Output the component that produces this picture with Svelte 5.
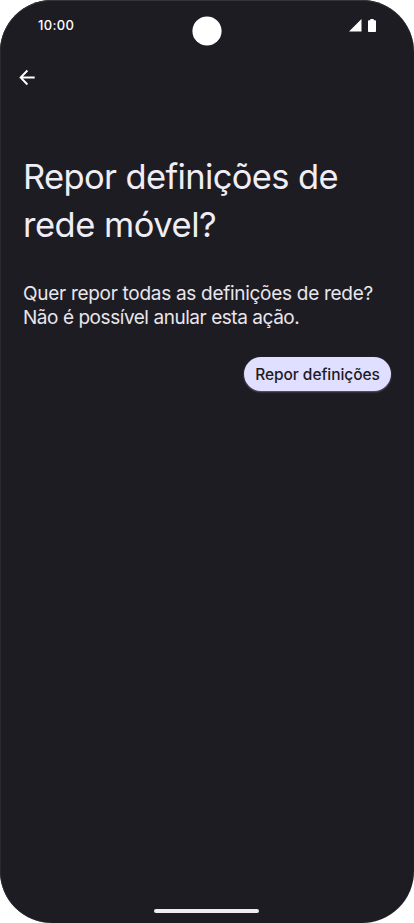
<script lang="ts">
  const time = '10:00';
  const title = ['Repor definições de', 'rede móvel?'];
  const message = ['Quer repor todas as definições de rede?', 'Não é possível anular esta ação.'];
</script>

<div class="phone">
  <header class="status">
    <span class="time">{time}</span>
    <svg class="camera" width="30" height="30" viewBox="0 0 30 30" aria-hidden="true"><circle cx="15" cy="15" r="14.6" fill="#fff" /></svg>
    <span class="indicators">
      <svg class="signal" width="13" height="13" viewBox="0 0 13 13" aria-hidden="true"><path d="M12.5 0V12.5H0Z" /></svg>
      <svg width="8" height="13" viewBox="0 0 8 13" aria-hidden="true"><path d="M2.3 0H5.7V1.2H7.2Q8 1.2 8 2V12.2Q8 13 7.2 13H.8Q0 13 0 12.2V2Q0 1.2.8 1.2H2.3Z" /></svg>
    </span>
  </header>
  <nav>
    <button class="back" aria-label="Voltar">
      <svg width="16" height="16" viewBox="0 0 16 16" aria-hidden="true"><path d="M15.7 7.5H1.6M8.4 .5L1.6 7.5L8.4 14.5" /></svg>
    </button>
  </nav>
  <main>
    <h1>
      {#each title as line, i}<span class="t{i}">{line}</span>{/each}
    </h1>
    <p>
      {#each message as line, i}<span class="m{i}">{line}</span>{/each}
    </p>
    <div class="actions"><button class="reset">Repor definições</button></div>
  </main>
  <footer><span class="handle"></span></footer>
</div>

<style>
  :global(body) { background: #fff; overflow: hidden; }
  .phone {
    box-sizing: border-box;
    width: 414px;
    height: 923px;
    display: flex;
    flex-direction: column;
    border-radius: 52px;
    overflow: hidden;
    background: #1d1c22;
    box-shadow: inset 0 1px #34343a, inset 1px 0 #292930;
    color: #efedf5;
    font-family: Inter, "Open Sans", sans-serif;
  }
  .status {
    display: grid;
    grid-template-columns: 1fr 30px 1fr;
    height: 62px;
    flex: none;
  }
  .time { padding: 16px 0 0 38px; font-size: 13px; line-height: 18px; font-weight: 500; letter-spacing: .35px; color: #fff; }
  .camera { display: block; margin-top: 16px; }
  .indicators { display: flex; justify-content: flex-end; gap: 7px; padding: 19px 38px 0 0; }
  .indicators path { fill: #fff; }
  .signal { margin-right: -1px; }
  nav { height: 80px; box-sizing: border-box; flex: none; padding: 8px 0 0 19px; }
  button { margin: 0; border: 0; font-family: inherit; }
  .back { display: block; width: 16px; height: 16px; padding: 0; background: none; }
  .back svg { display: block; overflow: visible; }
  .back path { fill: none; stroke: #fff; stroke-width: 1.9; }
  main { flex: 1; padding: 11px 23px 0; }
  h1 { margin: 0; font-size: 34.5px; line-height: 48px; font-weight: 380; }
  h1 span, p span { display: block; width: max-content; white-space: nowrap; }
  .t0 { letter-spacing: -.64px; }
  .t1 { letter-spacing: -.48px; }
  p { margin: 33px 0 0; font-size: 19px; line-height: 24px; color: #e8e6ed; }
  .m0 { letter-spacing: -.29px; }
  .m1 { letter-spacing: -.45px; }
  .actions { display: flex; justify-content: flex-end; padding-top: 27px; }
  .reset {
    width: 147px;
    height: 34px;
    padding: 1px 0 0;
    border-radius: 17px;
    background: #e1dfff;
    color: #1c1b26;
    font-size: 15.5px;
    line-height: 33px;
    font-weight: 460;
    letter-spacing: -.06px;
    white-space: nowrap;
    box-shadow: 0 1px 2px #62607b;
  }
  footer { height: 14px; flex: none; display: flex; justify-content: center; }
  .handle { width: 105px; height: 4px; margin-right: 1px; border-radius: 2px; background: #efedf0; }
</style>
